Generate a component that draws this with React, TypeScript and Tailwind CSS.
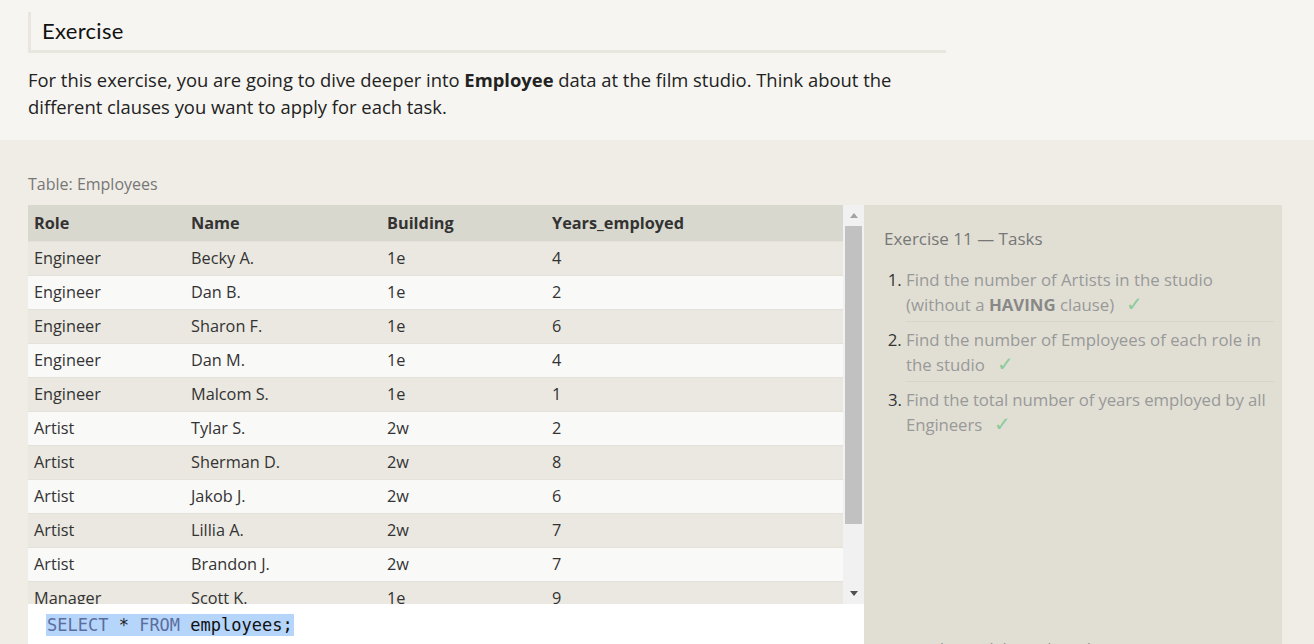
import React from 'react';

const rows: [string, string, string, number][] = [
  ['Engineer', 'Becky A.', '1e', 4],
  ['Engineer', 'Dan B.', '1e', 2],
  ['Engineer', 'Sharon F.', '1e', 6],
  ['Engineer', 'Dan M.', '1e', 4],
  ['Engineer', 'Malcom S.', '1e', 1],
  ['Artist', 'Tylar S.', '2w', 2],
  ['Artist', 'Sherman D.', '2w', 8],
  ['Artist', 'Jakob J.', '2w', 6],
  ['Artist', 'Lillia A.', '2w', 7],
  ['Artist', 'Brandon J.', '2w', 7],
  ['Manager', 'Scott K.', '1e', 9],
  ['Manager', 'Shirlee M.', '1e', 3],
  ['Manager', 'Daria O.', '2w', 6],
];

const Check = () => <span className="ml-[12px] text-[20px] leading-[20px] text-[#8ccb9b]">✓</span>;

const App: React.FC = () => {
  return (
    <div className="w-[1314px] h-[644px] overflow-hidden font-['Open_Sans',sans-serif] bg-[#efede6]">
      {/* intro */}
      <div className="bg-[#f6f5f1] h-[140px] px-[28px] pt-[12px]">
        <div className="w-[918px] h-[41px] border-l-[3px] border-b-[3px] border-[#e8e6dd] pl-[11px] flex items-center">
          <h2 className="text-[22px] text-[#111] font-['Lato',sans-serif] tracking-[0.3px] -mt-[2px]">Exercise</h2>
        </div>
        <p className="mt-[13px] text-[18.4px] leading-[27px] text-[#222]">
          For this exercise, you are going to dive deeper into <b>Employee</b> data at the film studio. Think about the
          <br />
          different clauses you want to apply for each task.
        </p>
      </div>

      {/* exercise body */}
      <div className="px-[28px] pt-[32px]">
        <div className="text-[16px] text-[#777] leading-[24px] mb-[9px]">Table: Employees</div>
        <div className="flex h-[440px]">
          <div className="w-[836px] flex flex-col">
            <div className="flex h-[399px]">
              <div className="w-[815px] overflow-hidden">
                <table className="w-full border-collapse text-[16.3px] text-[#333]">
                  <thead>
                    <tr className="bg-[#d9d8ce] h-[36px] text-left">
                      <th className="w-[157px] pl-[6px] font-bold">Role</th>
                      <th className="w-[196px] pl-[6px] font-bold">Name</th>
                      <th className="w-[165px] pl-[6px] font-bold">Building</th>
                      <th className="pl-[6px] font-bold">Years_employed</th>
                    </tr>
                  </thead>
                  <tbody>
                    {rows.map((r, i) => (
                      <tr
                        key={i}
                        className={`h-[34px] border-t border-[#e3e1d9] ${i % 2 === 0 ? 'bg-[#eae8e0]' : 'bg-[#f9f9f8]'}`}
                      >
                        <td className="pl-[6px] pt-[1px]">{r[0]}</td>
                        <td className="pl-[6px] pt-[1px]">{r[1]}</td>
                        <td className="pl-[6px] pt-[1px]">{r[2]}</td>
                        <td className="pl-[6px] pt-[1px]">{r[3]}</td>
                      </tr>
                    ))}
                  </tbody>
                </table>
              </div>
              {/* scrollbar */}
              <div className="w-[21px] bg-[#f1f1f1] flex flex-col items-center">
                <div className="h-[21px] flex items-center justify-center">
                  <svg width="8" height="5" viewBox="0 0 8 5"><path d="M0 5 L4 0 L8 5 Z" fill="#a3a3a3" /></svg>
                </div>
                <div className="w-[17px] h-[298px] bg-[#c1c1c1]" />
                <div className="flex-1" />
                <div className="h-[21px] flex items-center justify-center">
                  <svg width="8" height="5" viewBox="0 0 8 5"><path d="M0 0 L8 0 L4 5 Z" fill="#505050" /></svg>
                </div>
              </div>
            </div>
            <div className="flex-1 bg-white pl-[18px] pt-[9px]">
              <span className="bg-[#b5d5fb] px-[1px] py-[1px] text-[17px] font-['DejaVu_Sans_Mono',monospace] leading-[22px]">
                <span className="text-[#5c6e9e]">SELECT</span>
                <span className="text-[#222]"> * </span>
                <span className="text-[#5c6e9e]">FROM</span>
                <span className="text-[#111]"> employees;</span>
              </span>
            </div>
          </div>

          {/* tasks */}
          <div className="w-[418px] bg-[#e1dfd4] pl-[20px] pr-[8px] pt-[22px]">
            <div className="text-[17px] text-[#777] leading-[24px]">Exercise 11 — Tasks</div>
            <ol className="mt-[16px] list-decimal pl-[22px] text-[16.8px] leading-[25px] text-[#999] marker:text-[#333]">
              <li className="pb-[4px] border-b border-[#d7d5ca]">
                Find the number of Artists in the studio (without a <b className="text-[#888]">HAVING</b> clause)
                <Check />
              </li>
              <li className="pt-[5px] pb-[4px] border-b border-[#d7d5ca]">
                Find the number of Employees of each role in the studio
                <Check />
              </li>
              <li className="pt-[5px] pb-[4px] tracking-[-0.1px]">
                Find the total number of years employed by all Engineers
                <Check />
              </li>
            </ol>
            <div className="mt-[196px] pl-[26px] text-[15px] text-[#888]">Stuck? Read this task's Solution</div>
          </div>
        </div>
      </div>
    </div>
  );
};

export default App;
